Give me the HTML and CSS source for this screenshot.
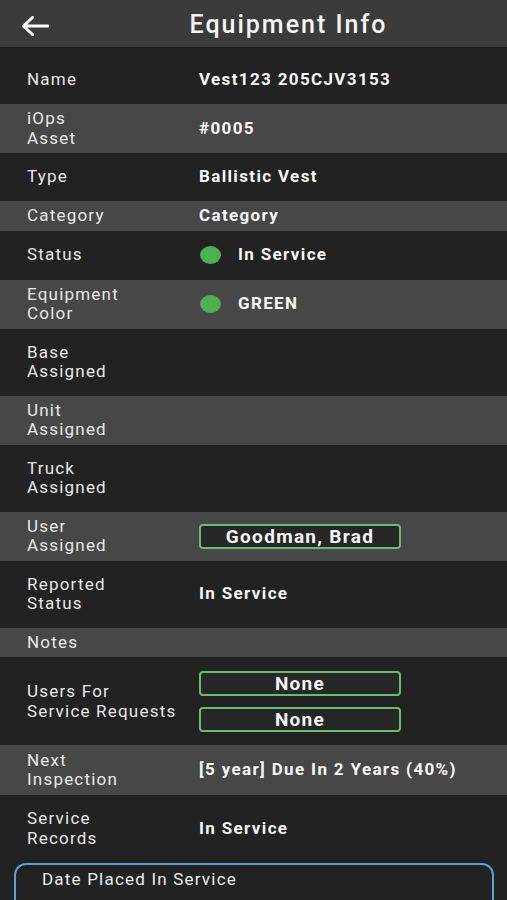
FILE: index.html
```html
<!DOCTYPE html>
<html lang="en">
<head>
    <meta charset="UTF-8">
    <meta name="viewport" content="width=device-width, initial-scale=1.0">
    <title>Equipment Info</title>
    <link rel="stylesheet" href="styles.css">
</head>
<body>
    <div class="topbar">
        <button class="back" aria-label="Back">
            <svg width="28" height="20" viewBox="0 0 28 20">
                <path d="M2.5 10 H27 M11.5 1.5 L2.5 10 L11.5 18.5" fill="none" stroke="#fff" stroke-width="3" stroke-linecap="round" stroke-linejoin="round"/>
            </svg>
        </button>
        <h1>Equipment Info</h1>
    </div>

    <div class="info-list">
        <div class="row dark first">
            <div class="label">Name</div>
            <div class="value">Vest123 205CJV3153</div>
        </div>
        <div class="row light">
            <div class="label">iOps<br>Asset</div>
            <div class="value">#0005</div>
        </div>
        <div class="row dark">
            <div class="label">Type</div>
            <div class="value">Ballistic Vest</div>
        </div>
        <div class="row light short">
            <div class="label">Category</div>
            <div class="value">Category</div>
        </div>
        <div class="row dark mid">
            <div class="label">Status</div>
            <div class="value"><span class="dot"></span>In Service</div>
        </div>
        <div class="row light">
            <div class="label">Equipment<br>Color</div>
            <div class="value"><span class="dot"></span>GREEN</div>
        </div>
        <div class="row dark tall">
            <div class="label">Base<br>Assigned</div>
            <div class="value"></div>
        </div>
        <div class="row light">
            <div class="label">Unit<br>Assigned</div>
            <div class="value"></div>
        </div>
        <div class="row dark tall">
            <div class="label">Truck<br>Assigned</div>
            <div class="value"></div>
        </div>
        <div class="row light">
            <div class="label">User<br>Assigned</div>
            <div class="value"><span class="chip">Goodman, Brad</span></div>
        </div>
        <div class="row dark tall">
            <div class="label">Reported<br>Status</div>
            <div class="value">In Service</div>
        </div>
        <div class="row light short">
            <div class="label">Notes</div>
            <div class="value"></div>
        </div>
        <div class="row dark requests">
            <div class="label">Users For<br>Service Requests</div>
            <div class="value chips">
                <span class="chip">None</span>
                <span class="chip">None</span>
            </div>
        </div>
        <div class="row light next">
            <div class="label">Next<br>Inspection</div>
            <div class="value">[5 year] Due In 2 Years (40%)</div>
        </div>
        <div class="row dark tall">
            <div class="label">Service<br>Records</div>
            <div class="value">In Service</div>
        </div>
    </div>

    <div class="date-card">
        <div class="date-title">Date Placed In Service</div>
    </div>
</body>
</html>
```

FILE: styles.css
```css
body {
    margin: 0;
    background-color: #222222;
    color: #f2f2f2;
    font-family: Roboto, "Noto Sans", Arial, sans-serif;
    width: 507px;
    height: 900px;
    overflow: hidden;
}
.topbar {
    display: flex;
    align-items: center;
    height: 47px;
    background-color: #3b3b3b;
    border-bottom: 1px solid #1b1b1b;
}
.back {
    width: 70px;
    height: 47px;
    padding: 4px 0 0 21px;
    background: none;
    border: none;
    display: flex;
    align-items: center;
}
.topbar h1 {
    flex: 1;
    margin: 2px 0 0 0;
    text-align: center;
    font-size: 25px;
    font-weight: 500;
    letter-spacing: 2px;
    color: #f5f5f5;
}
.row {
    display: flex;
    align-items: center;
    box-sizing: border-box;
    min-height: 48px;
}
.row.first {
    min-height: 56px;
    padding-top: 8px;
}
.row.mid {
    min-height: 49px;
}
.row.tall {
    min-height: 67px;
}
.row.light {
    background-color: #474747;
    min-height: 49px;
}
.row.light.short {
    min-height: 29.5px;
}
.row.next {
    min-height: 50px;
}
.row.requests {
    min-height: 88px;
    padding-top: 1px;
}
.label {
    width: 199px;
    padding-left: 27px;
    box-sizing: border-box;
    flex-shrink: 0;
    font-size: 17px;
    line-height: 19.5px;
    letter-spacing: 1.2px;
    color: #e8e8e8;
}
.value {
    display: flex;
    align-items: center;
    font-size: 17px;
    line-height: 19.5px;
    font-weight: 700;
    letter-spacing: 1.35px;
    color: #f7f7f7;
}
.dot {
    width: 21px;
    height: 18px;
    border-radius: 50%;
    background-color: #4caf50;
    margin: 0 17px 0 1px;
}
.chips {
    flex-direction: column;
    gap: 11px;
}
.chip {
    display: block;
    width: 202px;
    height: 25px;
    box-sizing: border-box;
    border: 2px solid #6cbb70;
    border-radius: 4px;
    background-color: #262626;
    text-align: center;
    font-size: 19px;
    line-height: 21px;
    letter-spacing: 1.3px;
}
.date-card {
    margin: 1px 13px 0 14px;
    height: 60px;
    border: 2px solid #5d9fd6;
    border-radius: 12px;
}
.date-title {
    padding: 4px 0 0 26px;
    font-size: 17px;
    letter-spacing: 1.2px;
    color: #ececec;
}
```
